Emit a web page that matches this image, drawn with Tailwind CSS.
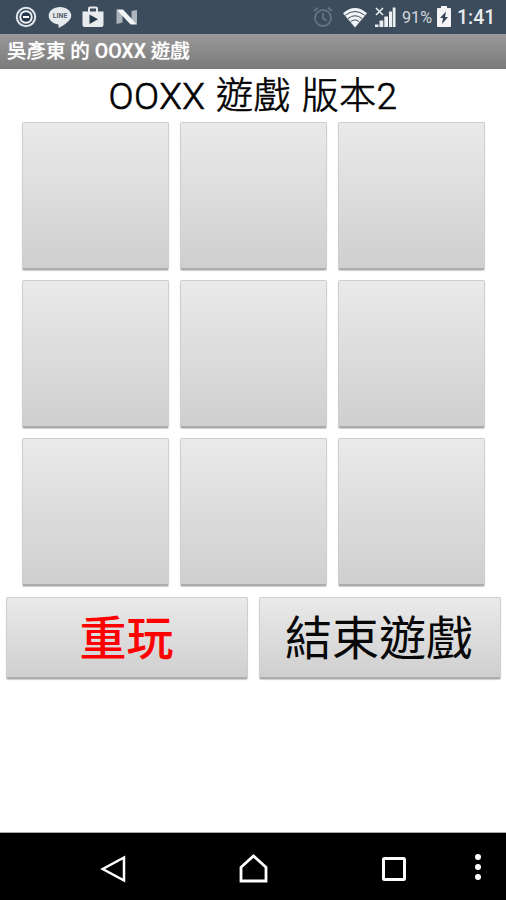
<!DOCTYPE html>
<html lang="zh-Hant">
<head>
<meta charset="utf-8">
<meta name="viewport" content="width=device-width, initial-scale=1">
<title>吳彥東 的 OOXX 遊戲</title>
<script src="https://cdn.jsdelivr.net/npm/@tailwindcss/browser@4"></script>
</head>
<body class="flex h-[900px] w-[506px] flex-col overflow-hidden bg-white font-[Roboto,'Noto_Sans_CJK_TC',sans-serif]">
  <!-- Status bar -->
  <header class="flex h-[34px] shrink-0 items-center justify-between bg-[#3c4c5c] pr-[9px] pl-[15px] text-[#e8ebee]">
    <div class="flex items-center">
      <svg class="h-[22px] w-[22px]" viewBox="0 0 22 22"><circle cx="11" cy="11" r="9.200" fill="none" stroke="#dfe6ee" stroke-width="2"/><circle cx="11" cy="11" r="6.700" fill="#f0f4f8"/><circle cx="11" cy="11" r="4.800" fill="#26384e"/><path d="M8 11h6" stroke="#fff" stroke-width="2"/></svg>
      <svg class="ml-[11px] h-[22px] w-[24px]" viewBox="0 0 24 22"><path d="M12 1C5.800 1 .7 4.900.7 9.800c0 4.200 3.700 7.700 8.900 8.500 1.300.3 1.100 1 .9 2.800-.1.700.4.900 1.100.5C14.500 20 23.300 15 23.300 9.800 23.300 4.900 18.200 1 12 1z" fill="#e6e9ec"/><text x="12" y="12.200" text-anchor="middle" font-family="Roboto,sans-serif" font-size="7" font-weight="700" fill="#536170">LINE</text></svg>
      <svg class="ml-[10px] h-[22px] w-[22px]" viewBox="0 0 22 22"><path d="M7 6V2.500Q7 1.500 8 1.500h6Q15 1.500 15 2.500V6" fill="none" stroke="#e8ebed" stroke-width="2"/><path d="M.5 5.500h21V19q0 2-2 2h-17q-2 0-2-2z" fill="#e8ebed"/><path d="M7.500 8.500v9.500l8.500-4.700z" fill="#25394a"/></svg>
      <svg class="ml-[12px] h-[18px] w-[22px]" viewBox="0 0 22 18"><path d="M.5 2v14l6-1.500V6z" fill="#a9b3bb"/><path d="M21 2v14l-5.500-4V3z" fill="#aeb7be"/><path d="M.5 1.500h6.500L21 16.500h-6.500z" fill="#f2f4f5"/></svg>
    </div>
    <div class="flex items-center">
      <svg class="h-[22px] w-[20px]" viewBox="0 0 20 22" fill="none" stroke="#66747f" stroke-width="1.800"><circle cx="10" cy="12" r="8"/><path d="M10 7v5.500l3.500 2M1 5l4-3.200M19 5l-4-3.200"/></svg>
      <svg class="ml-[9px] h-[21px] w-[26px]" viewBox="0 0 26 21"><path d="M1 6.200Q13-4.200 25 6.200L13 20.500z" fill="#f1f4f6"/><path d="M3.300 8.200Q13 .8 22.700 8.200M6 11.500Q13 6 20 11.500M8.700 14.700Q13 11.200 17.300 14.700" fill="none" stroke="#3c4c5c" stroke-width="1"/></svg>
      <svg class="ml-[6px] h-[22px] w-[23px]" viewBox="0 0 23 22"><path d="M2 2l7 7M9 2L2 9" stroke="#e5e9ec" stroke-width="1.600"/><path d="M1 18.500h3.500V21H1zM5.500 14.500h3.800V21H5.500zM10.300 10.500h3.700V21h-3.700zM15 5.500h3V21h-3zM18.700 1.500h2.800V21h-2.800z" fill="#edf0f2"/></svg>
      <span class="ml-[5px] w-[32px] text-[16.500px] leading-[22px] whitespace-nowrap text-[#d2d8dd]"><span class="inline-block origin-left scale-x-[0.98] pt-[2px]">91%</span></span>
      <svg class="ml-[3px] h-[22px] w-[14px]" viewBox="0 0 14 22"><path d="M4 0h6v2h3q1 0 1 1v17q0 1-1 1H1q-1 0-1-1V3q0-1 1-1h3z" fill="#f2f4f5"/><path d="M9 5.500L3 12h3l-1 6 6-7H8z" fill="#314354"/></svg>
      <span class="ml-[6px] w-[40px] pt-[2px] text-[19.500px] leading-[22px] font-medium whitespace-nowrap">1:41</span>
    </div>
  </header>

  <!-- Title bar -->
  <div class="flex h-[35px] shrink-0 items-center border-b border-[#777777] bg-linear-to-b from-[#999999] to-[#7b7b7b] pt-[2px] pl-[7px]">
    <h1 class="text-[19.500px] leading-none font-medium whitespace-nowrap text-white [text-shadow:0_0_1px_#ddd]">吳彥東 的 OOXX 遊戲</h1>
  </div>

  <main class="flex grow flex-col items-center">
    <h2 class="flex h-[53px] items-center pt-[2px] text-[37px] leading-none font-light tracking-[0.500px] [word-spacing:1px] whitespace-nowrap text-black [-webkit-text-stroke:0.600px_black]">OOXX 遊戲 版本2</h2>

    <!-- Game board -->
    <div class="grid grid-cols-3 gap-x-[11px] gap-y-[10px]">
      <button class="h-[148px] w-[147px] rounded-[2px] border border-b-2 border-[#cecece] border-b-[#acacac] bg-linear-to-b from-[#eaeaea] to-[#cfcfcf] shadow-[0_1px_1px_#0003]"></button>
      <button class="h-[148px] w-[147px] rounded-[2px] border border-b-2 border-[#cecece] border-b-[#acacac] bg-linear-to-b from-[#eaeaea] to-[#cfcfcf] shadow-[0_1px_1px_#0003]"></button>
      <button class="h-[148px] w-[147px] rounded-[2px] border border-b-2 border-[#cecece] border-b-[#acacac] bg-linear-to-b from-[#eaeaea] to-[#cfcfcf] shadow-[0_1px_1px_#0003]"></button>
      <button class="h-[148px] w-[147px] rounded-[2px] border border-b-2 border-[#cecece] border-b-[#acacac] bg-linear-to-b from-[#eaeaea] to-[#cfcfcf] shadow-[0_1px_1px_#0003]"></button>
      <button class="h-[148px] w-[147px] rounded-[2px] border border-b-2 border-[#cecece] border-b-[#acacac] bg-linear-to-b from-[#eaeaea] to-[#cfcfcf] shadow-[0_1px_1px_#0003]"></button>
      <button class="h-[148px] w-[147px] rounded-[2px] border border-b-2 border-[#cecece] border-b-[#acacac] bg-linear-to-b from-[#eaeaea] to-[#cfcfcf] shadow-[0_1px_1px_#0003]"></button>
      <button class="h-[148px] w-[147px] rounded-[2px] border border-b-2 border-[#cecece] border-b-[#acacac] bg-linear-to-b from-[#eaeaea] to-[#cfcfcf] shadow-[0_1px_1px_#0003]"></button>
      <button class="h-[148px] w-[147px] rounded-[2px] border border-b-2 border-[#cecece] border-b-[#acacac] bg-linear-to-b from-[#eaeaea] to-[#cfcfcf] shadow-[0_1px_1px_#0003]"></button>
      <button class="h-[148px] w-[147px] rounded-[2px] border border-b-2 border-[#cecece] border-b-[#acacac] bg-linear-to-b from-[#eaeaea] to-[#cfcfcf] shadow-[0_1px_1px_#0003]"></button>
    </div>

    <!-- Actions -->
    <div class="mt-[11px] grid w-full grid-cols-2 gap-[11px] pr-[5px] pl-[6px]">
      <button class="flex h-[82px] items-center justify-center rounded-[2px] border border-b-2 border-[#cecece] border-b-[#acacac] bg-linear-to-b from-[#eaeaea] to-[#cfcfcf] pt-[2px] pr-[1px] text-[47px] leading-none font-medium text-[#ff0000] shadow-[0_1px_1px_#0003]">重玩</button>
      <button class="flex h-[82px] items-center justify-center rounded-[2px] border border-b-2 border-[#cecece] border-b-[#acacac] bg-linear-to-b from-[#eaeaea] to-[#cfcfcf] pt-[2px] pr-[2px] text-[47px] leading-none font-normal text-[#080808] shadow-[0_1px_1px_#0003]">結束遊戲</button>
    </div>
  </main>

  <!-- Navigation bar -->
  <nav class="flex h-[68px] shrink-0 items-center border-t border-[#aaaaaa] bg-black pt-[4px] pl-[100px]">
    <svg class="h-[30px] w-[27px]" viewBox="0 0 27 30" fill="none" stroke="#fff" stroke-width="2.500"><path d="M24 3.500v23L2.800 15z"/></svg>
    <svg class="ml-[111px] h-[30px] w-[30px]" viewBox="0 0 30 30" fill="none" stroke="#fff" stroke-width="2.800"><path d="M3 27V13.300L15.500 2 28 13.300V27z"/></svg>
    <svg class="ml-[113px] h-[26px] w-[26px]" viewBox="0 0 26 26" fill="none" stroke="#fff" stroke-width="3"><rect x="2.500" y="2.500" width="21" height="21" rx="1"/></svg>
    <svg class="ml-[67px] h-[30px] w-[8px]" viewBox="0 0 8 30" fill="#fff"><circle cx="4" cy="3" r="3"/><circle cx="4" cy="13" r="3"/><circle cx="4" cy="23" r="3"/></svg>
  </nav>
</body>
</html>
